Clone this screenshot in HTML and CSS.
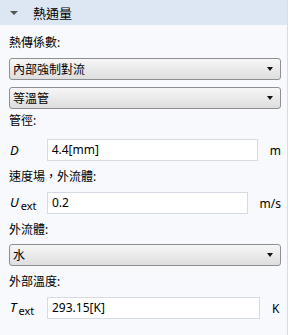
FILE: index.html
```html
<!DOCTYPE html>
<html lang="zh-Hant">
<head>
    <meta charset="UTF-8">
    <title>熱通量</title>
    <link rel="stylesheet" href="styles.css">
</head>
<body>
    <div class="panel">
        <div class="header">
            <span class="arrow"></span>
            <span class="title">熱通量</span>
        </div>
        <div class="content">
            <div class="label first">熱傳係數:</div>
            <div class="select">內部強制對流<span class="caret"></span></div>
            <div class="select next">等溫管<span class="caret"></span></div>

            <div class="label l-d">管徑:</div>
            <div class="row">
                <span class="sym"><i>D</i></span>
                <div class="input w1">4.4[mm]</div>
                <span class="unit">m</span>
            </div>

            <div class="label">速度場，外流體:</div>
            <div class="row">
                <span class="sym"><i>U</i><sub>ext</sub></span>
                <div class="input w2">0.2</div>
                <span class="unit">m/s</span>
            </div>

            <div class="label l-f">外流體:</div>
            <div class="select">水<span class="caret"></span></div>

            <div class="label">外部溫度:</div>
            <div class="row">
                <span class="sym"><i>T</i><sub>ext</sub></span>
                <div class="input w1">293.15[K]</div>
                <span class="unit">K</span>
            </div>
        </div>
    </div>
</body>
</html>
```

FILE: styles.css
```css
*{
    margin: 0;
    padding: 0;
    box-sizing: border-box;
}
body{
    background: #ffffff;
    font-family: "Noto Sans", "Noto Sans CJK TC", sans-serif;
    font-size: 12px;
    color: #000;
}
.panel{
    width: 288px;
    height: 335px;
    background: #f7f9fd;
    border-right: 1px solid #d6dde7;
}
.header{
    height: 25px;
    background: #dde7f3;
    display: flex;
    align-items: center;
    padding-left: 10px;
}
.arrow{
    width: 0;
    height: 0;
    border-left: 4px solid transparent;
    border-right: 4px solid transparent;
    border-top: 4px solid #555;
    margin-top: 1px;
}
.title{
    margin-left: 15px;
    font-size: 13px;
}
.content{
    padding: 0 6px 0 9px;
}
.label{
    height: 14px;
    line-height: 14px;
    margin-top: 9px;
    margin-bottom: 8px;
}
.label.first{
    margin-top: 11px;
}
.label.l-d{
    margin-top: 5px;
    margin-bottom: 11px;
}
.label.l-f{
    margin-bottom: 7px;
}
.select{
    height: 22px;
    border: 1px solid #8e8f91;
    border-radius: 3px;
    background: linear-gradient(#f6f6f6, #dedede);
    display: flex;
    align-items: center;
    justify-content: space-between;
    padding: 0 7px 0 3px;
}
.select.next{
    margin-top: 7px;
}
.caret{
    width: 0;
    height: 0;
    border-left: 3px solid transparent;
    border-right: 3px solid transparent;
    border-top: 4px solid #111;
}
.row{
    display: flex;
    align-items: center;
    height: 22px;
}
.sym{
    width: 38px;
    font-size: 13px;
    padding-left: 1px;
}
.sym sub{
    font-size: 11px;
    vertical-align: -3px;
    margin-left: 2px;
}
.input{
    height: 22px;
    background: #fff;
    border: 1px solid #d6dbe3;
    line-height: 20px;
    padding-left: 4px;
}
.w1{
    width: 213px;
}
.w2{
    width: 201px;
}
.unit{
    margin-left: 12px;
}
```
